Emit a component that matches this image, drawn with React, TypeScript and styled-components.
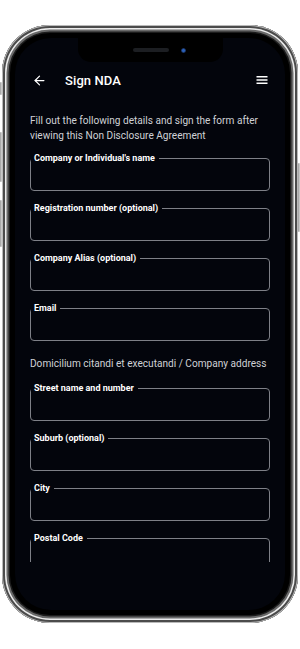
import styled, { createGlobalStyle } from "styled-components";
import { ArrowLeft } from "lucide-react";

const GlobalStyle = createGlobalStyle`
  html, body {
    margin: 0;
    padding: 0;
    background: #ffffff;
  }
  body {
    font-family: Roboto, "Noto Sans", sans-serif;
  }
  * {
    box-sizing: border-box;
  }
`;

const Page = styled.div`
  width: 300px;
  height: 649px;
  padding: 25px 2px 0 2px;
`;

const Phone = styled.div`
  position: relative;
  width: 296px;
  height: 598px;
  border-radius: 48px;
  background: #000;
  padding: 13px;
  box-shadow: inset 0 0 0 1px #b9b9b9, inset 0 0 0 3px #4b4b4b,
    inset 0 0 0 4.5px #ececec, inset 0 0 0 6.5px #6a6a6a,
    inset 0 0 0 8px #1c1c1c;
`;

const SideButton = styled.div<{ side: "left" | "right"; top: number; len: number }>`
  position: absolute;
  ${(p) => (p.side === "left" ? "left: -2px;" : "right: -2px;")}
  top: ${(p) => p.top}px;
  width: 2px;
  height: ${(p) => p.len}px;
  background: linear-gradient(to right, #9a9a9a, #d6d6d6);
  border-radius: 1px;
`;

const Screen = styled.div`
  width: 100%;
  height: 100%;
  border-radius: 36px;
  background: #03050c;
  overflow: hidden;
  display: flex;
  flex-direction: column;
`;

const Notch = styled.div`
  align-self: center;
  flex: none;
  width: 145px;
  height: 24px;
  background: #000;
  border-radius: 0 0 13px 13px;
  display: flex;
  align-items: center;
  justify-content: center;
  gap: 12px;
  padding-left: 18px;
`;

const Speaker = styled.div`
  width: 36px;
  height: 4px;
  border-radius: 2px;
  background: #1c1e22;
`;

const Camera = styled.div`
  width: 5px;
  height: 5px;
  border-radius: 50%;
  background: radial-gradient(circle, #2a5fb8 30%, #0d1424 80%);
`;

const Header = styled.div`
  flex: none;
  height: 36px;
  display: flex;
  align-items: center;
  padding: 0 17px;
  color: #ffffff;
`;

const BackButton = styled.div`
  display: flex;
  align-items: center;
  width: 33px;
`;

const Title = styled.div`
  font-size: 13px;
  font-weight: 500;
  letter-spacing: 0.1px;
`;

const MenuButton = styled.div`
  margin-left: auto;
  display: flex;
  align-items: center;
`;

const Scroll = styled.div`
  flex: none;
  height: 464px;
  overflow: hidden;
  padding: 15px 15px 0 15px;
  display: flex;
  flex-direction: column;
`;

const Intro = styled.p`
  margin: 0 0 10px 0;
  font-size: 10.1px;
  line-height: 15px;
  color: #cfd1d6;
`;

const SectionText = styled.p`
  margin: 3px 0 12px 0;
  font-size: 10.1px;
  line-height: 15px;
  color: #cfd1d6;
  white-space: nowrap;
`;

const FieldBox = styled.fieldset`
  flex: none;
  margin: 0 0 12px 0;
  padding: 0;
  border: 1px solid #7e8087;
  border-radius: 4px;
  min-width: 0;
`;

const Legend = styled.legend`
  margin-left: 0;
  padding: 0 4px 0 3px;
  font-size: 9px;
  line-height: 10px;
  font-weight: 700;
  color: #ffffff;
`;

const Input = styled.input`
  display: block;
  width: 100%;
  height: 27px;
  border: none;
  background: transparent;
  outline: none;
  color: #fff;
  padding: 0 8px;
`;

const BottomArea = styled.div`
  flex: 1;
`;

function Field({ label }: { label: string }) {
  return (
    <FieldBox>
      <Legend>{label}</Legend>
      <Input />
    </FieldBox>
  );
}

function Hamburger() {
  return (
    <svg width="12" height="10" viewBox="0 0 12 10">
      <rect x="0.5" y="1" width="11" height="1.5" fill="#fff" />
      <rect x="0.5" y="4.25" width="11" height="1.5" fill="#fff" />
      <rect x="0.5" y="7.5" width="11" height="1.5" fill="#fff" />
    </svg>
  );
}

export default function App() {
  return (
    <Page>
      <GlobalStyle />
      <Phone>
        <SideButton side="left" top={57} len={13} />
        <SideButton side="left" top={107} len={50} />
        <SideButton side="left" top={175} len={47} />
        <SideButton side="right" top={138} len={69} />
        <Screen>
          <Notch>
            <Speaker />
            <Camera />
          </Notch>
          <Header>
            <BackButton>
              <ArrowLeft size={15} strokeWidth={2} />
            </BackButton>
            <Title>Sign NDA</Title>
            <MenuButton>
              <Hamburger />
            </MenuButton>
          </Header>
          <Scroll>
            <Intro>
              Fill out the following details and sign the form after viewing this Non
              Disclosure Agreement
            </Intro>
            <Field label="Company or Individual's name" />
            <Field label="Registration number (optional)" />
            <Field label="Company Alias (optional)" />
            <Field label="Email" />
            <SectionText>Domicilium citandi et executandi / Company address</SectionText>
            <Field label="Street name and number" />
            <Field label="Suburb (optional)" />
            <Field label="City" />
            <Field label="Postal Code" />
          </Scroll>
          <BottomArea />
        </Screen>
      </Phone>
    </Page>
  );
}
